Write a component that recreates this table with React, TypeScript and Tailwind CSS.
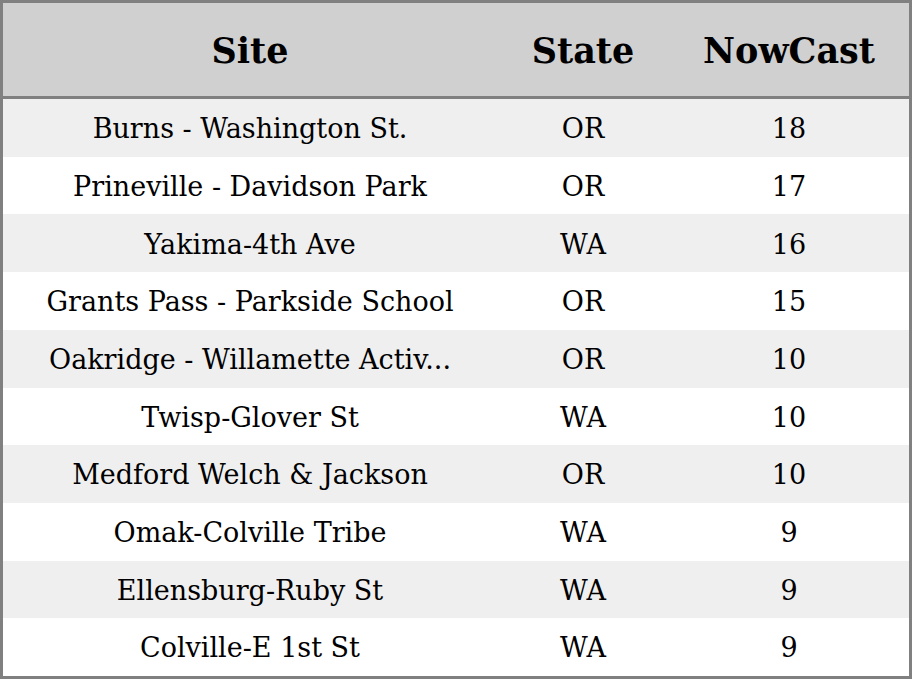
import React from "react";

const rows: [string, string, string][] = [
  ["Burns - Washington St.", "OR", "18"],
  ["Prineville - Davidson Park", "OR", "17"],
  ["Yakima-4th Ave", "WA", "16"],
  ["Grants Pass - Parkside School", "OR", "15"],
  ["Oakridge - Willamette Activ...", "OR", "10"],
  ["Twisp-Glover St", "WA", "10"],
  ["Medford Welch & Jackson", "OR", "10"],
  ["Omak-Colville Tribe", "WA", "9"],
  ["Ellensburg-Ruby St", "WA", "9"],
  ["Colville-E 1st St", "WA", "9"],
];

export default function App() {
  return (
    <div
      className="w-[912px] h-[679px] border-[3px] border-[#808080] flex flex-col bg-white text-black"
      style={{ fontFamily: '"DejaVu Serif", serif' }}
    >
      <div className="h-[96px] shrink-0 bg-[#d0d0d0] flex items-center pt-[3px] font-bold text-[35px] border-b-[3px] border-[#808080]">
        <div className="w-[494px] text-center">Site</div>
        <div className="w-[172px] text-center">State</div>
        <div className="flex-1 text-center">NowCast</div>
      </div>
      <div className="flex-1 flex flex-col">
        {rows.map((r, i) => (
          <div
            key={i}
            className={`flex-1 flex items-center pt-[3px] text-[27px] ${i % 2 === 0 ? "bg-[#efefef]" : "bg-white"}`}
          >
            <div className="w-[494px] text-center">{r[0]}</div>
            <div className="w-[172px] text-center">{r[1]}</div>
            <div className="flex-1 text-center">{r[2]}</div>
          </div>
        ))}
      </div>
    </div>
  );
}
